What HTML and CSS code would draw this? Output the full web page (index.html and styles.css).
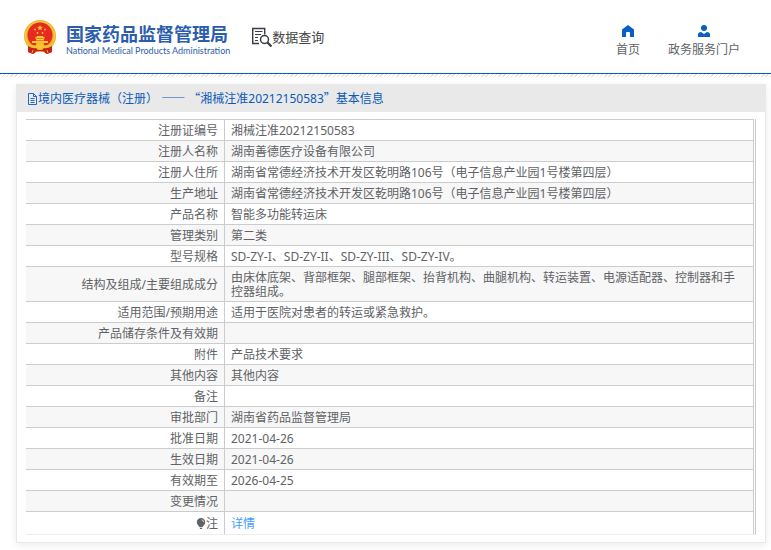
FILE: index.html
```html
<!DOCTYPE html>
<html lang="zh-CN">
<head>
	<meta charset="UTF-8">
	<meta name="viewport" content="width=device-width, initial-scale=1.0">
	<title>国家药品监督管理局 数据查询</title>
	<link rel="stylesheet" href="styles.css">
</head>
<body>
	<header class="header">
		<div class="logo">
			<svg class="emblem" viewBox="0 0 32 34" width="32" height="34">
				<path d="M5 23 L4 32 L9 34 L12 32 L20 32 L23 34 L28 32 L27 23 Z" fill="#d3231d"/>
				<circle cx="16" cy="16" r="16" fill="#ecb22c"/>
				<circle cx="16" cy="16" r="14.500" fill="none" stroke="#f8d052" stroke-width="1"/>
				<circle cx="16" cy="15" r="12.500" fill="#e62a20"/>
				<path d="M16 5l.8 1.800 2 .2-1.500 1.300.4 2-1.700-1-1.700 1 .4-2L13.200 7l2-.2z" fill="#f8c936"/>
				<g fill="#f8c936">
					<circle cx="11" cy="9.500" r=".9"/>
					<circle cx="21" cy="9.500" r=".9"/>
					<circle cx="13.500" cy="13" r=".9"/>
					<circle cx="18.500" cy="13" r=".9"/>
					<path d="M11 17.500h1l1-1.500h6l1 1.500h1v1H11zM12 19h8v1.500h-8zM8 21h16v2H8z"/>
				</g>
				<path d="M2 23q6 3 10 2a4 4 0 0 1 8 0q4 1 10-2l-2 4q-4 2-8 1h-8q-4 1-8-1z" fill="#f3bf32"/>
				<path d="M4 26q5 3 8 2l2 2h4l2-2q3 1 8-2v6l-5 2-3-3h-8l-3 3-5-2z" fill="#c9201b"/>
				<circle cx="16" cy="27" r="2" fill="#f8c936"/>
				<path d="M9 30l-1 3M23 30l1 3" stroke="#f0b62c" fill="none"/>
			</svg>
			<div class="logo-text">
				<div class="logo-name">国家药品监督管理局</div>
				<div class="logo-en">National Medical Products Administration</div>
			</div>
		</div>
		<div class="query">
			<svg viewBox="0 0 20 20" width="20" height="20" fill="none" stroke="#373b49">
				<path d="M7 16.500H.7V1.500h12v6" stroke-width="1.400"/>
				<path d="M3 4.500h7.500M3 7.500h6M3 10.500h3M3 13.500h3"/>
				<circle cx="12.500" cy="12.500" r="4" stroke-width="1.500"/>
				<path d="M15.500 15.500l4 4" stroke-width="2.200"/>
			</svg>
			<span>数据查询</span>
		</div>
		<nav class="nav">
			<a href="#">
				<svg viewBox="0 0 12 12" width="12" height="12" fill="#0a5fc4">
					<path d="M6 0L0 4.500V12h4V8q0-1 1-1h2q1 0 1 1v4h4V4.500z"/>
				</svg>
				首页
			</a>
			<a href="#">
				<svg viewBox="0 0 12 12" width="12" height="12" fill="#0a5fc4">
					<circle cx="6" cy="3" r="3"/>
					<path d="M0 12V9.500Q0 7.500 3 7l3 2 3-2q3 .5 3 2.500V12z"/>
				</svg>
				政务服务门户
			</a>
		</nav>
	</header>

	<main class="card">
		<h1 class="card-title">
			<svg viewBox="0 0 11 12" width="11" height="12" fill="none" stroke="#2367bd">
				<path d="M1.500.5h5l3 3v8h-8zM6.500.5v3h3M3.500 5.500h4M3.500 7.500h4M3.500 9.500h4"/>
			</svg>
			<span>境内医疗器械（注册） <span class="cjk">——</span> <span class="cjk">“</span>湘械注准20212150583<span class="cjk">”</span>基本信息</span>
		</h1>
		<div class="card-body">
			<table class="info">
				<tr><th scope="row">注册证编号</th><td>湘械注准20212150583</td></tr>
				<tr><th scope="row">注册人名称</th><td>湖南善德医疗设备有限公司</td></tr>
				<tr><th scope="row">注册人住所</th><td>湖南省常德经济技术开发区乾明路106号（电子信息产业园1号楼第四层）</td></tr>
				<tr><th scope="row">生产地址</th><td>湖南省常德经济技术开发区乾明路106号（电子信息产业园1号楼第四层）</td></tr>
				<tr><th scope="row">产品名称</th><td>智能多功能转运床</td></tr>
				<tr><th scope="row">管理类别</th><td>第二类</td></tr>
				<tr><th scope="row">型号规格</th><td>SD-ZY-I、SD-ZY-II、SD-ZY-III、SD-ZY-IV。</td></tr>
				<tr><th scope="row">结构及组成/主要组成成分</th><td>由床体底架、背部框架、腿部框架、抬背机构、曲腿机构、转运装置、电源适配器、控制器和手控器组成。</td></tr>
				<tr><th scope="row">适用范围/预期用途</th><td>适用于医院对患者的转运或紧急救护。</td></tr>
				<tr><th scope="row">产品储存条件及有效期</th><td></td></tr>
				<tr><th scope="row">附件</th><td>产品技术要求</td></tr>
				<tr><th scope="row">其他内容</th><td>其他内容</td></tr>
				<tr><th scope="row">备注</th><td></td></tr>
				<tr><th scope="row">审批部门</th><td>湖南省药品监督管理局</td></tr>
				<tr><th scope="row">批准日期</th><td>2021-04-26</td></tr>
				<tr><th scope="row">生效日期</th><td>2021-04-26</td></tr>
				<tr><th scope="row">有效期至</th><td>2026-04-25</td></tr>
				<tr><th scope="row">变更情况</th><td></td></tr>
				<tr class="note">
					<th scope="row">
						<svg viewBox="0 0 10 12" width="10" height="12" fill="#606266">
							<path d="M5 0a4.200 4.200 0 0 1 4.200 4.200C9.200 6.500 7 7.500 6.700 9H3.300C3 7.500.8 6.500.8 4.200A4.200 4.200 0 0 1 5 0zM3.500 9.700h3L5.800 11H4.200z"/>
							<path d="M5.500 1.800q2 .3 2.200 2.200" fill="none" stroke="#fff" stroke-width=".7"/>
						</svg>注
					</th>
					<td><a href="#">详情</a></td>
				</tr>
			</table>
		</div>
	</main>
</body>
</html>
```

FILE: styles.css
```css
*{
	margin: 0;
	padding: 0;
	box-sizing: border-box;
}
body{
	background: #fff;
	color: #606266;
	font: 12px/14px "Noto Sans", "Noto Sans CJK SC", sans-serif;
}
a{
	color: inherit;
	text-decoration: none;
}
svg{
	display: block;
	flex: none;
}

/* 页头 */
.header{
	display: flex;
	align-items: center;
	height: 74px;
	padding: 0 31px 0 24px;
	border-bottom: 1px solid #0a5ab8;
}
/* 蓝线下面的斜纹 */
.header + .card::before{
	content: "";
	position: absolute;
	top: 74px;
	left: 0;
	right: 0;
	height: 3px;
	background: repeating-linear-gradient(135deg, #e4e4e4 0 1px, #fff 1px 3px);
}
.logo{
	display: flex;
	align-items: center;
	gap: 10px;
}
.logo-text{
	padding-top: 2px;
	color: #2c5dad;
	white-space: nowrap;
}
.logo-name{
	font: bold 18px/26px "Noto Sans CJK SC", sans-serif;
}
.logo-en{
	font: 9px/10px Lato, sans-serif;
}
.query{
	display: flex;
	align-items: center;
	margin-left: 22px;
	color: #444;
	font-size: 13px;
	white-space: nowrap;
}
.nav{
	display: flex;
	gap: 28px;
	margin-left: auto;
	padding-top: 8px;
}
.nav a{
	display: flex;
	flex-direction: column;
	align-items: center;
	gap: 6px;
	white-space: nowrap;
}

/* 信息卡片 */
.card{
	margin: 10px 5px 8px 16px;
	border: 1px solid #e8e8e8;
	box-shadow: 0 2px 8px rgba(0, 0, 0, .08);
}
.card-title{
	display: flex;
	align-items: center;
	height: 27px;
	padding-left: 10px;
	background: #e9e9e9;
	color: #0a5ab8;
	font-size: 12px;
	font-weight: normal;
}
.cjk{
	font-family: "Noto Sans CJK SC", sans-serif;
}
.card-body{
	padding: 7px 9px;
}
.info{
	width: 100%;
	border-collapse: separate;
	border-spacing: 0;
	border-right: 1px solid #c8c9cc;
	border-bottom: 1px solid #ebeef5;
	padding-right: 1px;
}
.info th,
.info td{
	height: 21px;
	padding: 4px 6px 2px;
	border-top: 1px solid #ccc;
	border-right: 1px solid #ccc;
}
.info th{
	width: 199px;
	font-weight: normal;
	text-align: right;
}
.info td{
	padding-right: 14px;
	text-align: left;
}
.info tr:nth-child(even){
	background: #f7f7f7;
}
.info .note th,
.info .note td{
	height: 23px;
}
.note svg{
	display: inline-block;
	vertical-align: -2px;
}
.note a{
	color: #409eff;
}
```
